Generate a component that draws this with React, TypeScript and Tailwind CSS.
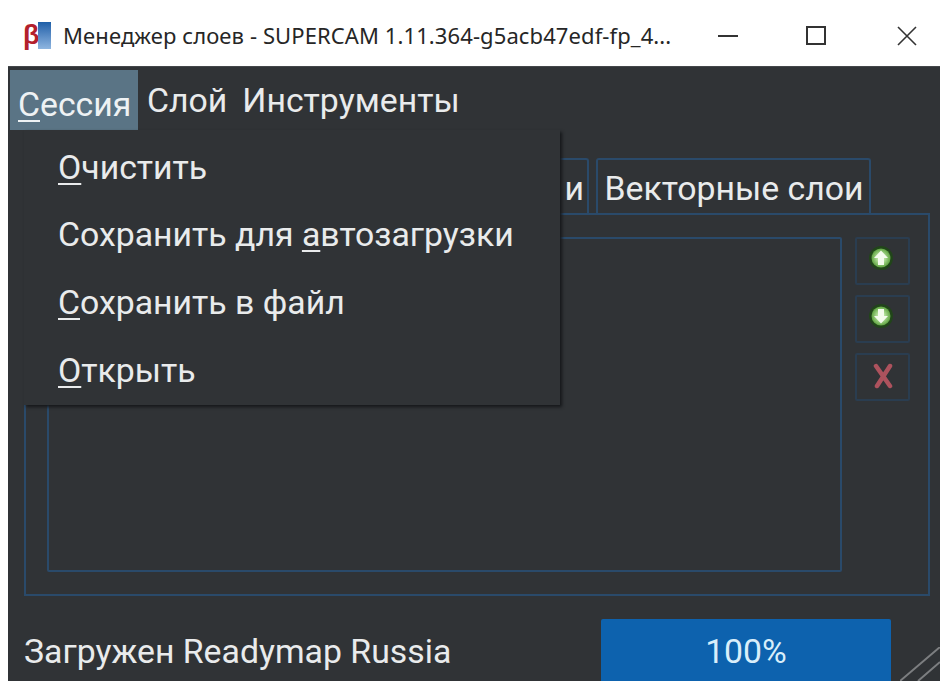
import type { ReactNode } from "react";

const menuItems: { before?: string; key: string; after: string }[] = [
  { key: "О", after: "чистить" },
  { before: "Сохранить для ", key: "а", after: "втозагрузки" },
  { key: "С", after: "охранить в файл" },
  { key: "О", after: "ткрыть" },
];

const Mnemonic = ({ children }: { children: ReactNode }) => (
  <span className="underline decoration-[2px] underline-offset-[4px]">{children}</span>
);

const AppLogo = () => (
  <div className="flex h-[27px] w-[28px] items-start">
    <span className="-mt-[2px] w-[15px] text-center font-['Liberation_Sans',sans-serif] text-[27px] leading-[30px] font-bold text-[#b3202c]">
      β
    </span>
    <div className="h-[27px] w-[13px] bg-gradient-to-b from-[#1d5fa8] to-[#8fb6e0]" />
  </div>
);

const MoveIcon = ({ down }: { down?: boolean }) => (
  <svg width="24" height="24" viewBox="0 0 24 24" className={down ? "rotate-180" : ""}>
    <defs>
      <radialGradient id="move-glow">
        <stop offset="0.4" stopColor="#b4e09c" />
        <stop offset="1" stopColor="#5fa341" />
      </radialGradient>
    </defs>
    <circle cx="12" cy="12" r="12" fill="#21451a" />
    <circle cx="12" cy="12" r="9.5" fill="url(#move-glow)" />
    <path d="M12 4.5 19 12h-4v7H9v-7H5z" fill="#f4fbee" />
  </svg>
);

const RemoveIcon = () => (
  <svg width="24" height="26" viewBox="0 0 24 26">
    <path d="M5 3 19 23M19 3 6 23" stroke="#ad525d" strokeWidth="4.5" strokeLinecap="round" />
  </svg>
);

const SideButton = ({ children, lift }: { children: ReactNode; lift?: boolean }) => (
  <div
    className={`flex h-[48px] w-[55px] items-center justify-center rounded-[2px] border-2 border-[#2a3d50] ${lift ? "pr-[3px] pb-[6px]" : "pb-[2px]"}`}
  >
    {children}
  </div>
);

const SizeGrip = () => (
  <svg width="40" height="34" viewBox="0 0 40 34" className="absolute right-0 bottom-0">
    <path d="M0 34 40 0M18 34 40 15" stroke="#7c7e80" strokeWidth="2" />
  </svg>
);

export default function App() {
  return (
    <div className="flex h-[681px] w-[940px] flex-col overflow-hidden bg-white font-['Roboto',sans-serif]">
      {/* window caption */}
      <header className="flex h-[66px] shrink-0 items-center pt-[5px] pr-[23px] pl-[23px]">
        <AppLogo />
        <span className="ml-[12px] font-['Noto_Sans',sans-serif] text-[22px] tracking-[0.1px] whitespace-nowrap text-[#262626]">
          Менеджер слоев - SUPERCAM 1.11.364-g5acb47edf-fp_4...
        </span>
        <div className="ml-auto flex items-center">
          <div className="h-[2px] w-[20px] bg-[#333]" />
          <div className="ml-[68px] h-[19px] w-[20px] border-2 border-[#333]" />
          <svg width="20" height="20" viewBox="0 0 20 20" className="ml-[71px]">
            <path d="M1 1 19 19M19 1 1 19" stroke="#333" strokeWidth="1.6" />
          </svg>
        </div>
      </header>

      <main className="relative ml-2 flex min-h-0 flex-1 flex-col border-t border-[#44474a] bg-[#303336] text-[33.8px] text-[#e9ebec]">
        {/* menu bar */}
        <nav className="flex h-[63px] shrink-0 items-start pt-[3px] pl-[2px] leading-[60px]">
          <div className="h-[60px] w-[128px] whitespace-nowrap bg-[#5a7485] pt-[5px] pl-[8px] text-[#eef2f4]">
            <Mnemonic>С</Mnemonic>ессия
          </div>
          <span className="mt-[1px] ml-[9px]">Слой</span>
          <span className="mt-[1px] ml-[15px]">Инструменты</span>
        </nav>

        {/* open session menu */}
        <div className="absolute top-[63px] left-[16px] z-10 flex h-[275px] w-[536px] flex-col bg-[#303336] pt-[4px] pl-[34px] shadow-[2px_2px_3px_#15171a]">
          {menuItems.map((item, i) => (
            <div key={i} className="flex h-[68px] items-center whitespace-pre">
              {item.before}
              <Mnemonic>{item.key}</Mnemonic>
              {item.after}
            </div>
          ))}
        </div>

        <section className="flex min-h-0 flex-1 flex-col pr-[10px] pl-4">
          {/* tab strip, the last tab sits flush on the pane */}
          <div className="mt-[28px] flex h-[55px] shrink-0 justify-end gap-[7px] pr-[59px]">
            <div className="w-[200px] rounded-t-[3px] border-2 border-b-0 border-[#2a4a6a] pr-[3px] text-right leading-[58px]">
              и
            </div>
            <div className="w-[275px] rounded-t-[3px] border-2 border-b-0 border-[#2a4a6a] pl-[1px] text-center leading-[58px] whitespace-nowrap">
              Векторные слои
            </div>
          </div>

          <div className="flex h-[383px] shrink-0 gap-[13px] border-2 border-[#2a4a6a] pt-[22px] pr-[18px] pb-[22px] pl-[21px]">
            <div className="flex-1 rounded-[2px] border-2 border-[#2a4a6a]" />
            <div className="flex flex-col gap-[10px]">
              <SideButton lift>
                <MoveIcon />
              </SideButton>
              <SideButton lift>
                <MoveIcon down />
              </SideButton>
              <SideButton>
                <RemoveIcon />
              </SideButton>
            </div>
          </div>
        </section>

        {/* status row */}
        <footer className="relative flex h-[62px] shrink-0 items-center pt-[4px] pl-4">
          <span>Загружен Readymap Russia</span>
          <div className="absolute top-0 bottom-0 left-[593px] flex w-[290px] items-center justify-center rounded-t-[2px] bg-[#0d62ae] pt-[4px] text-[#d9eefa]">
            100%
          </div>
          <SizeGrip />
        </footer>
      </main>
    </div>
  );
}
